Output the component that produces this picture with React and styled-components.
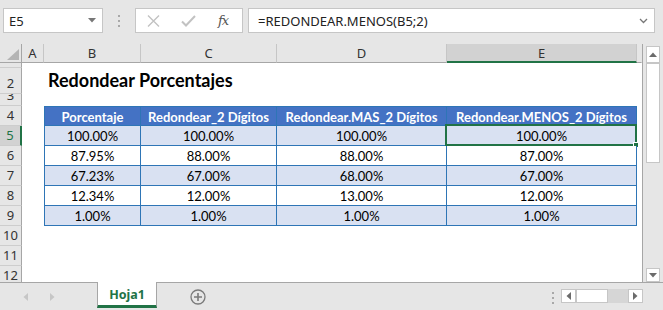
import React from 'react';
import styled, { createGlobalStyle } from 'styled-components';

const Global = createGlobalStyle`
  html, body { margin: 0; padding: 0; }
  body { width: 663px; height: 310px; overflow: hidden; background: #e6e6e6; }
  *, *::before, *::after { box-sizing: border-box; }
`;

const GREEN = '#217346';
const BLUE_LINE = '#2e75b6';

const Window = styled.div`
  width: 663px;
  height: 310px;
  background: #e6e6e6;
  display: flex;
  flex-direction: column;
  font-family: "Noto Sans", "Open Sans", sans-serif;
  color: #222;
  overflow: hidden;
`;

/* ---------- formula bar ---------- */
const FormulaBar = styled.div`
  height: 44px;
  flex: none;
  display: flex;
  align-items: flex-start;
  padding: 8px 0 0 3px;
`;

const NameBox = styled.div`
  width: 100px;
  height: 25px;
  background: #fff;
  border: 1px solid #c6c6c6;
  display: flex;
  align-items: center;
  justify-content: space-between;
  padding: 0 6px 0 5px;
  font-size: 13px;
  color: #222;
`;

const Grip = styled.div`
  width: 32px;
  height: 25px;
  display: flex;
  flex-direction: column;
  align-items: center;
  justify-content: center;
  gap: 3px;
`;

const GripDot = styled.span`
  width: 2px;
  height: 2px;
  background: #a8a8a8;
`;

const ButtonsBox = styled.div`
  width: 108px;
  height: 25px;
  background: #fff;
  border: 1px solid #c6c6c6;
  display: flex;
  align-items: center;
  padding-left: 11px;
  gap: 21px;
`;

const FxText = styled.span`
  font-family: "DejaVu Serif", "Liberation Serif", serif;
  font-style: italic;
  font-size: 13px;
  color: #555;
  letter-spacing: -1px;
  margin-left: 1px;
`;

const FormulaInput = styled.div`
  width: 407px;
  height: 25px;
  margin-left: 5px;
  background: #fff;
  border: 1px solid #c6c6c6;
  display: flex;
  align-items: center;
  justify-content: space-between;
  padding: 0 6px 0 9px;
  font-size: 13px;
  color: #222;
`;

/* ---------- main area ---------- */
const Main = styled.div`
  height: 238px;
  flex: none;
  display: flex;
`;

const Sheet = styled.div`
  width: 643px;
  height: 238px;
  background: #fff;
  border-right: 1px solid #a6a6a6;
  display: flex;
  flex-direction: column;
  overflow: hidden;
`;

const HeaderRow = styled.div`
  height: 19px;
  flex: none;
  display: flex;
  background: #e6e6e6;
`;

const Corner = styled.div`
  width: 22px;
  height: 19px;
  border-right: 1px solid #a6a6a6;
  border-bottom: 1px solid #a6a6a6;
  position: relative;
`;

const ColHead = styled.div`
  width: ${p => p.$w}px;
  height: 19px;
  flex: none;
  display: flex;
  align-items: center;
  justify-content: center;
  font-size: 13px;
  color: #333;
  background: ${p => (p.$sel ? '#d2d2d2' : '#e6e6e6')};
  border-right: 1px solid ${p => (p.$last ? 'transparent' : '#c6c6c6')};
  border-bottom: ${p => (p.$sel ? `2px solid ${GREEN}` : '1px solid #a6a6a6')};
  padding-top: ${p => (p.$sel ? '1px' : '0')};
`;

const Body = styled.div`
  flex: 1;
  overflow: hidden;
  display: flex;
  flex-direction: column;
`;

const Row = styled.div`
  height: ${p => p.$h}px;
  flex: none;
  display: flex;
`;

const RowHead = styled.div`
  width: 22px;
  flex: none;
  height: 100%;
  overflow: hidden;
  display: flex;
  align-items: flex-end;
  justify-content: center;
  font-size: 13px;
  line-height: 18px;
  padding-bottom: 1px;
  color: ${p => (p.$sel ? GREEN : '#333')};
  background: ${p => (p.$sel ? '#d2d2d2' : '#e6e6e6')};
  border-bottom: 1px solid #cdcdcd;
  border-right: ${p => (p.$sel ? `2px solid ${GREEN}` : '1px solid #a6a6a6')};
`;

const Cell = styled.div`
  width: ${p => p.$w}px;
  flex: none;
  height: 100%;
  position: relative;
  display: flex;
  align-items: center;
  justify-content: center;
  white-space: nowrap;
  font-family: Lato, "Noto Sans", sans-serif;
  font-size: 13px;
  color: #000;
`;

const TitleCell = styled(Cell)`
  justify-content: flex-start;
  align-items: flex-end;
  padding: 0 0 3px 4px;
  font-size: 18px;
  font-weight: 700;
  overflow: visible;
  z-index: 1;
`;

const TableCell = styled(Cell)`
  background: ${p => (p.$head ? '#4472c4' : p.$band ? '#d9e1f2' : '#fff')};
  color: ${p => (p.$head ? '#fff' : '#000')};
  font-weight: ${p => (p.$head ? 700 : 400)};
  border-right: 1px solid ${BLUE_LINE};
  border-bottom: 1px solid ${BLUE_LINE};
  border-left: ${p => (p.$first ? `1px solid ${BLUE_LINE}` : 'none')};
  border-top: ${p => (p.$head ? `1px solid ${BLUE_LINE}` : 'none')};
  padding-top: 1px;
`;

const Selection = styled.div`
  position: absolute;
  left: -2px;
  top: -2px;
  right: -1px;
  bottom: -1px;
  border: 2px solid ${GREEN};
  pointer-events: none;
`;

const FillHandle = styled.div`
  position: absolute;
  right: -4px;
  bottom: -4px;
  width: 6px;
  height: 6px;
  background: ${GREEN};
  border: 1px solid #fff;
`;

/* ---------- vertical scrollbar ---------- */
const VScroll = styled.div`
  width: 20px;
  height: 238px;
  display: flex;
  flex-direction: column;
  padding: 2px 0 0 3px;
`;

const ScrollBtn = styled.div`
  width: ${p => p.$w || 14}px;
  height: ${p => p.$h || 14}px;
  flex: none;
  background: #fff;
  border: 1px solid #c6c6c6;
  display: flex;
  align-items: center;
  justify-content: center;
  margin-top: ${p => (p.$push ? 'auto' : '0')};
`;

const Thumb = styled.div`
  width: ${p => p.$w}px;
  height: ${p => p.$h}px;
  flex: none;
  background: #fff;
  border: 1px solid #c6c6c6;
`;

/* ---------- tab bar ---------- */
const TabBar = styled.div`
  height: 28px;
  flex: none;
  display: flex;
  align-items: flex-start;
  border-top: 1px solid #a6a6a6;
`;

const NavArea = styled.div`
  width: 97px;
  height: 27px;
  display: flex;
  align-items: center;
  padding-left: 23px;
  gap: 22px;
`;

const Tab = styled.div`
  width: 60px;
  height: 26px;
  margin-top: -1px;
  background: #fff;
  border-left: 1px solid #a6a6a6;
  border-right: 1px solid #a6a6a6;
  border-bottom: 3px solid ${GREEN};
  display: flex;
  align-items: center;
  justify-content: center;
  font-size: 12.5px;
  font-weight: 700;
  color: ${GREEN};
  padding-top: 1px;
`;

const AddSheet = styled.div`
  margin-left: 33px;
  height: 27px;
  display: flex;
  align-items: center;
`;

const Spacer = styled.div`
  flex: 1;
`;

const BottomGrip = styled(Grip)`
  width: 17px;
  height: 27px;
  padding-top: 2px;
`;

const HScroll = styled.div`
  display: flex;
  margin-top: 6px;
  margin-right: 20px;
`;

const Track = styled.div`
  width: 20px;
  height: 14px;
  background: #d6d6d6;
`;

const TriDown = ({ color = '#6b6b6b', size = 8 }) => (
  <svg width={size} height={size / 2 + 1} viewBox="0 0 8 5">
    <path d="M0 0 L8 0 L4 4.5 Z" fill={color} />
  </svg>
);

const TriUp = ({ color = '#6b6b6b' }) => (
  <svg width="8" height="5" viewBox="0 0 8 5">
    <path d="M0 5 L8 5 L4 0.5 Z" fill={color} />
  </svg>
);

const TriLeft = ({ color = '#6b6b6b' }) => (
  <svg width="5" height="8" viewBox="0 0 5 8">
    <path d="M5 0 L5 8 L0.5 4 Z" fill={color} />
  </svg>
);

const TriRight = ({ color = '#6b6b6b' }) => (
  <svg width="5" height="8" viewBox="0 0 5 8">
    <path d="M0 0 L0 8 L4.5 4 Z" fill={color} />
  </svg>
);

const cols = [
  { key: 'A', w: 22 },
  { key: 'B', w: 97 },
  { key: 'C', w: 136 },
  { key: 'D', w: 170 },
  { key: 'E', w: 190 },
];

const header = ['Porcentaje', 'Redondear_2 Dígitos', 'Redondear.MAS_2 Dígitos', 'Redondear.MENOS_2 Dígitos'];
const data = [
  ['100.00%', '100.00%', '100.00%', '100.00%'],
  ['87.95%', '88.00%', '88.00%', '87.00%'],
  ['67.23%', '67.00%', '68.00%', '67.00%'],
  ['12.34%', '12.00%', '13.00%', '12.00%'],
  ['1.00%', '1.00%', '1.00%', '1.00%'],
];

const tableW = [97, 136, 170, 190];

export default function App() {
  return (
    <>
      <Global />
      <Window>
        <FormulaBar>
          <NameBox>
            <span>E5</span>
            <TriDown color="#777" />
          </NameBox>
          <Grip>
            <GripDot />
            <GripDot />
            <GripDot />
          </Grip>
          <ButtonsBox>
            <svg width="13" height="12" viewBox="0 0 13 12">
              <path d="M1 0.5 L12 11.5 M12 0.5 L1 11.5" stroke="#c2c2c2" strokeWidth="1.4" fill="none" />
            </svg>
            <svg width="15" height="12" viewBox="0 0 15 12">
              <path d="M1 6.5 L5 10.5 L14 1" stroke="#c2c2c2" strokeWidth="2" fill="none" />
            </svg>
            <FxText>fx</FxText>
          </ButtonsBox>
          <FormulaInput>
            <span>=REDONDEAR.MENOS(B5;2)</span>
            <svg width="9" height="6" viewBox="0 0 9 6">
              <path d="M1 1 L4.5 4.5 L8 1" stroke="#777" strokeWidth="1.3" fill="none" />
            </svg>
          </FormulaInput>
        </FormulaBar>

        <Main>
          <Sheet>
            <HeaderRow>
              <Corner>
                <svg width="22" height="19" viewBox="0 0 22 19" style={{ position: 'absolute', left: 0, top: 0 }}>
                  <path d="M19 5 L19 16 L7 16 Z" fill="#b4b4b4" />
                </svg>
              </Corner>
              {cols.map(c => (
                <ColHead key={c.key} $w={c.w} $sel={c.key === 'E'}>
                  {c.key}
                </ColHead>
              ))}
              <ColHead $w={5} $last />
            </HeaderRow>
            <Body>
              <Row $h={5}>
                <RowHead>1</RowHead>
              </Row>
              <Row $h={26}>
                <RowHead>2</RowHead>
                <Cell $w={22} />
                <TitleCell $w={97}>Redondear Porcentajes</TitleCell>
              </Row>
              <Row $h={12}>
                <RowHead>3</RowHead>
              </Row>
              <Row $h={20}>
                <RowHead>4</RowHead>
                <Cell $w={22} />
                {header.map((h, i) => (
                  <TableCell key={h} $w={tableW[i]} $head $first={i === 0}>
                    {h}
                  </TableCell>
                ))}
              </Row>
              {data.map((r, ri) => (
                <Row $h={20} key={ri}>
                  <RowHead $sel={ri === 0}>{ri + 5}</RowHead>
                  <Cell $w={22} />
                  {r.map((v, ci) => (
                    <TableCell key={ci} $w={tableW[ci]} $band={ri % 2 === 0} $first={ci === 0}>
                      {v}
                      {ri === 0 && ci === 3 && (
                        <Selection>
                          <FillHandle />
                        </Selection>
                      )}
                    </TableCell>
                  ))}
                </Row>
              ))}
              {[10, 11, 12].map(n => (
                <Row $h={20} key={n}>
                  <RowHead>{n}</RowHead>
                </Row>
              ))}
            </Body>
          </Sheet>
          <VScroll>
            <ScrollBtn $h={17}>
              <TriUp />
            </ScrollBtn>
            <Thumb $w={14} $h={100} />
            <ScrollBtn $push $h={14}>
              <TriDown size={8} />
            </ScrollBtn>
          </VScroll>
        </Main>

        <TabBar>
          <NavArea>
            <TriLeft color="#c6c6c6" />
            <TriRight color="#c6c6c6" />
          </NavArea>
          <Tab>Hoja1</Tab>
          <AddSheet>
            <svg width="16" height="16" viewBox="0 0 16 16">
              <circle cx="8" cy="8" r="7" stroke="#7a7a7a" strokeWidth="1.3" fill="none" />
              <path d="M8 4 L8 12 M4 8 L12 8" stroke="#7a7a7a" strokeWidth="1.6" />
            </svg>
          </AddSheet>
          <Spacer />
          <BottomGrip>
            <GripDot />
            <GripDot />
            <GripDot />
          </BottomGrip>
          <HScroll>
            <ScrollBtn $w={15} $h={14}>
              <TriLeft />
            </ScrollBtn>
            <Thumb $w={32} $h={14} />
            <Track />
            <ScrollBtn $w={15} $h={14}>
              <TriRight />
            </ScrollBtn>
          </HScroll>
        </TabBar>
      </Window>
    </>
  );
}
